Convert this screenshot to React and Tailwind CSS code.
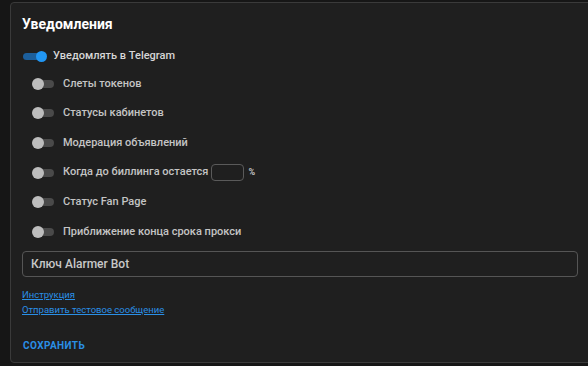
import React, { useState } from 'react'

const SwitchOn = () => (
  <div className='relative w-[24px] h-[12px] shrink-0'>
    <div className='absolute left-0 top-[2.5px] w-[21px] h-[7px] rounded-full bg-[#1c5f9c]' />
    <div className='absolute left-[13px] top-[0.5px] w-[11px] h-[11px] rounded-full bg-[#2196f3]' />
  </div>
)

const SwitchOff = () => (
  <div className='relative w-[22px] h-[12px] shrink-0'>
    <div className='absolute left-[6px] top-[2px] w-[16px] h-[8px] rounded-full bg-[#4a4a4a]' />
    <div className='absolute left-0 top-0 w-[12px] h-[12px] rounded-full bg-[#bdbdbd]' />
  </div>
)

const SubRow = ({ children }) => (
  <div className='flex items-center h-[29.6px] pl-[10px] gap-[9px]'>
    <SwitchOff />
    {children}
  </div>
)

const App = () => {
  const [botKey, setBotKey] = useState('')

  return (
    <div className='w-[588px] h-[366px] overflow-hidden bg-[#161616] pt-[2px] pl-[10px]' style={{ fontFamily: 'Roboto, "Noto Sans", sans-serif' }}>
      <div className='w-[600px] h-[361px] bg-[#1f1f1f] border border-[#3a3a3a] rounded-[4px] pt-[11px] pl-[11px]'>
        <h2 className='h-[20px] leading-[20px] text-[14px] font-bold text-white'>Уведомления</h2>

        <div className='flex items-center h-[20px] mt-[12px] pl-[1px] gap-[6px]'>
          <SwitchOn />
          <span className='text-[11px] font-medium text-[#d6d6d6]'>Уведомлять в Telegram</span>
        </div>

        <div className='mt-[3px]'>
          <SubRow><span className='text-[11px] font-medium text-[#c4c4c4]'>Слеты токенов</span></SubRow>
          <SubRow><span className='text-[11px] font-medium text-[#c4c4c4]'>Статусы кабинетов</span></SubRow>
          <SubRow><span className='text-[11px] font-medium text-[#c4c4c4]'>Модерация объявлений</span></SubRow>
          <SubRow>
            <span className='text-[11px] font-medium text-[#c4c4c4]'>Когда до биллинга остается</span>
            <div className='flex items-center gap-[4px] -ml-[6px]'>
              <input className='w-[33px] h-[17px] rounded-[4px] border border-[#5a5a5a] bg-transparent outline-none text-[11px] text-white px-1' />
              <span className='text-[9px] font-bold text-[#c4c4c4]'>%</span>
            </div>
          </SubRow>
          <SubRow><span className='text-[11px] font-medium text-[#c4c4c4]'>Статус Fan Page</span></SubRow>
          <SubRow><span className='text-[11px] font-medium text-[#c4c4c4]'>Приближение конца срока прокси</span></SubRow>
        </div>

        <input
          value={botKey}
          onChange={(e) => setBotKey(e.target.value)}
          placeholder='Ключ Alarmer Bot'
          className='block mt-[4px] w-[556px] h-[26px] rounded-[4px] border border-[#555555] bg-transparent px-[8px] text-[12px] font-medium text-[#d0d0d0] placeholder:text-[#c8c8c8] outline-none'
        />

        <div className='mt-[10px] flex flex-col items-start'>
          <a href='#' className='h-[15px] leading-[15px] text-[9.5px] text-[#2a8fe6] underline'>Инструкция</a>
          <a href='#' className='h-[15px] leading-[15px] text-[9.5px] text-[#2a8fe6] underline'>Отправить тестовое сообщение</a>
        </div>

        <button className='mt-[21px] ml-[1px] h-[16px] leading-[16px] text-[10px] font-bold tracking-[0.4px] text-[#2a8fe6] uppercase'>
          Сохранить
        </button>
      </div>
    </div>
  )
}

export default App
